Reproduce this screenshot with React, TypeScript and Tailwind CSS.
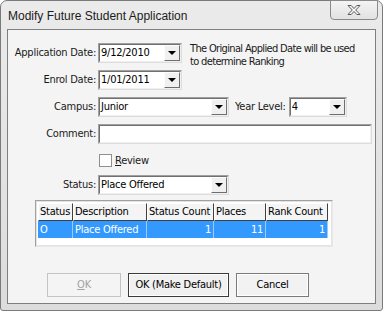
import React from 'react';

const font = "font-['DejaVu_Sans_Condensed','Liberation_Sans',Arial,sans-serif]";

function DropButton() {
  return (
    <div className="flex w-[16px] items-center justify-center border border-[#fdfdfd] border-r-[#6e6e6e] border-b-[#6e6e6e] bg-[#f0f0f0]">
      <span className="h-0 w-0 border-x-[4px] border-t-[4px] border-x-transparent border-t-black" />
    </div>
  );
}

function Combo({ value, className }: { value: string; className: string }) {
  return (
    <div className={`flex h-[20px] shrink-0 border border-[#a0a0a0] border-r-[#dcdcdc] border-b-[#dcdcdc] bg-white ${className}`}>
      <div className="flex flex-1 border border-[#707070] border-r-[#f0f0f0] border-b-[#f0f0f0]">
        <div className="flex-1 whitespace-nowrap pl-[1px] leading-[16px] text-black">{value}</div>
        <DropButton />
      </div>
    </div>
  );
}

function Label({ text }: { text: string }) {
  return (
    <div className="flex w-[80px] shrink-0 justify-end whitespace-nowrap leading-[20px] text-[#1a1a1a]">{text}</div>
  );
}

function CloseGlyph() {
  return (
    <svg width="16" height="12" viewBox="0 0 16 12">
      <path
        d="M2 1.5h3.2L8 4.6l2.8-3.1H14L9.7 6 14 10.5h-3.2L8 7.4l-2.8 3.1H2L6.3 6Z"
        fill="#fafafa"
        stroke="#5a5a5a"
        strokeWidth="1"
        strokeLinejoin="round"
      />
    </svg>
  );
}

const cols = [
  { h: 'Status', v: 'O', w: 'w-[35px]', right: false },
  { h: 'Description', v: 'Place Offered', w: 'w-[74px]', right: false },
  { h: 'Status Count', v: '1', w: 'w-[67px]', right: true },
  { h: 'Places', v: '11', w: 'w-[52px]', right: true },
  { h: 'Rank Count', v: '1', w: 'w-[62px]', right: true },
];

export default function App() {
  return (
    <div className={`h-[311px] w-[383px] overflow-hidden bg-white ${font} text-[11px] tracking-[-0.25px]`}>
      <div className="flex h-full flex-col rounded-t-[7px] rounded-b-[3px] border border-[#7a7a7a] bg-gradient-to-b from-[#ebebeb] to-[#dcdcdc]">
        {/* title bar */}
        <div className="flex h-[28px] shrink-0 items-start justify-between">
          <div className="whitespace-nowrap pl-[7px] pt-[7px] font-['Liberation_Sans',Arial,sans-serif] text-[12px] leading-[16px] tracking-normal text-[#1c1c1c]">
            Modify Future Student Application
          </div>
          <div className="mr-[4px] mt-[-1px] flex h-[20px] w-[48px] items-center justify-center rounded-b-[4px] border border-[#8a8a8a] bg-gradient-to-b from-[#f4f4f4] to-[#e2e2e2]">
            <CloseGlyph />
          </div>
        </div>

        {/* client area */}
        <div className="mx-[6px] mb-[6px] flex min-h-0 flex-1 flex-col border border-[#7f7f7f] bg-[#f4f4f4] pl-[8px] pt-[13px]">
          {/* application date */}
          <div className="flex h-[20px] items-start gap-[2px]">
            <Label text="Application Date:" />
            <Combo value="9/12/2010" className="w-[84px]" />
            <div className="ml-[6px] mt-[-1px] whitespace-nowrap leading-[13px] tracking-[-0.65px] text-[#1a1a1a]">
              The Original Applied Date will be used
              <br />
              to determine Ranking
            </div>
          </div>

          <div className="mt-[7px] flex items-start gap-[2px]">
            <Label text="Enrol Date:" />
            <Combo value="1/01/2011" className="w-[84px]" />
          </div>

          <div className="mt-[7px] flex items-start gap-[2px]">
            <Label text="Campus:" />
            <Combo value="Junior" className="w-[131px]" />
            <div className="ml-[4px] whitespace-nowrap leading-[20px] text-[#1a1a1a]">Year Level:</div>
            <Combo value="4" className="ml-[1px] w-[58px]" />
          </div>

          <div className="mt-[7px] flex items-start gap-[2px]">
            <Label text="Comment:" />
            <div className="h-[20px] w-[274px] border border-[#a0a0a0] border-r-[#dcdcdc] border-b-[#dcdcdc] bg-white">
              <div className="h-full border border-[#707070] border-r-[#f0f0f0] border-b-[#f0f0f0]" />
            </div>
          </div>

          <div className="ml-[83px] mt-[10px] flex items-center gap-[3px]">
            <div className="h-[13px] w-[13px] border border-[#8f8f8f] bg-white" />
            <span className="leading-[13px] text-[#1a1a1a]">
              <span className="underline">R</span>eview
            </span>
          </div>

          <div className="mt-[8px] flex items-start gap-[2px]">
            <Label text="Status:" />
            <Combo value="Place Offered" className="w-[131px]" />
          </div>

          {/* grid */}
          <div className="ml-[19px] mt-[5px] h-[47px] w-[298px] shrink-0 border border-[#a0a0a0] border-r-[#e8e8e8] border-b-[#e8e8e8] bg-white">
            <div className="h-full border border-[#e3e3e3] pl-[1px] pt-[1px]">
              <div className="flex h-[18px]">
                {cols.map((c) => (
                  <div
                    key={c.h}
                    className={`${c.w} overflow-hidden whitespace-nowrap border border-white border-r-[#404040] border-b-[#404040] bg-[#f4f4f4] pl-[1px] leading-[16px] text-black`}
                  >
                    {c.h}
                  </div>
                ))}
              </div>
              <div className="flex h-[17px]">
                {cols.map((c) => (
                  <div
                    key={c.h}
                    className={`${c.w} whitespace-nowrap border-r border-r-[#9ccbf5] bg-[#3399ff] px-[2px] leading-[17px] text-white ${c.right ? 'text-right' : ''}`}
                  >
                    {c.v}
                  </div>
                ))}
              </div>
            </div>
          </div>

          {/* buttons */}
          <div className="mt-[26px] flex gap-[7px] pl-[31px]">
            <div className="flex h-[24px] w-[74px] items-center justify-center border border-[#c4c4c4] bg-[#f4f4f4] text-[#a3a3a3]">
              <span>
                <span className="underline">O</span>K
              </span>
            </div>
            <div className="flex h-[24px] w-[101px] items-center justify-center border border-[#3a3a3a] bg-[#f0f0f0] text-black">
              <div className="flex h-full w-full items-center justify-center whitespace-nowrap border border-white">OK (Make Default)</div>
            </div>
            <div className="flex h-[24px] w-[73px] items-center justify-center border border-[#7a7a7a] bg-[#f2f2f2] text-black">
              <div className="flex h-full w-full items-center justify-center border border-white">Cancel</div>
            </div>
          </div>
        </div>
      </div>
    </div>
  );
}
